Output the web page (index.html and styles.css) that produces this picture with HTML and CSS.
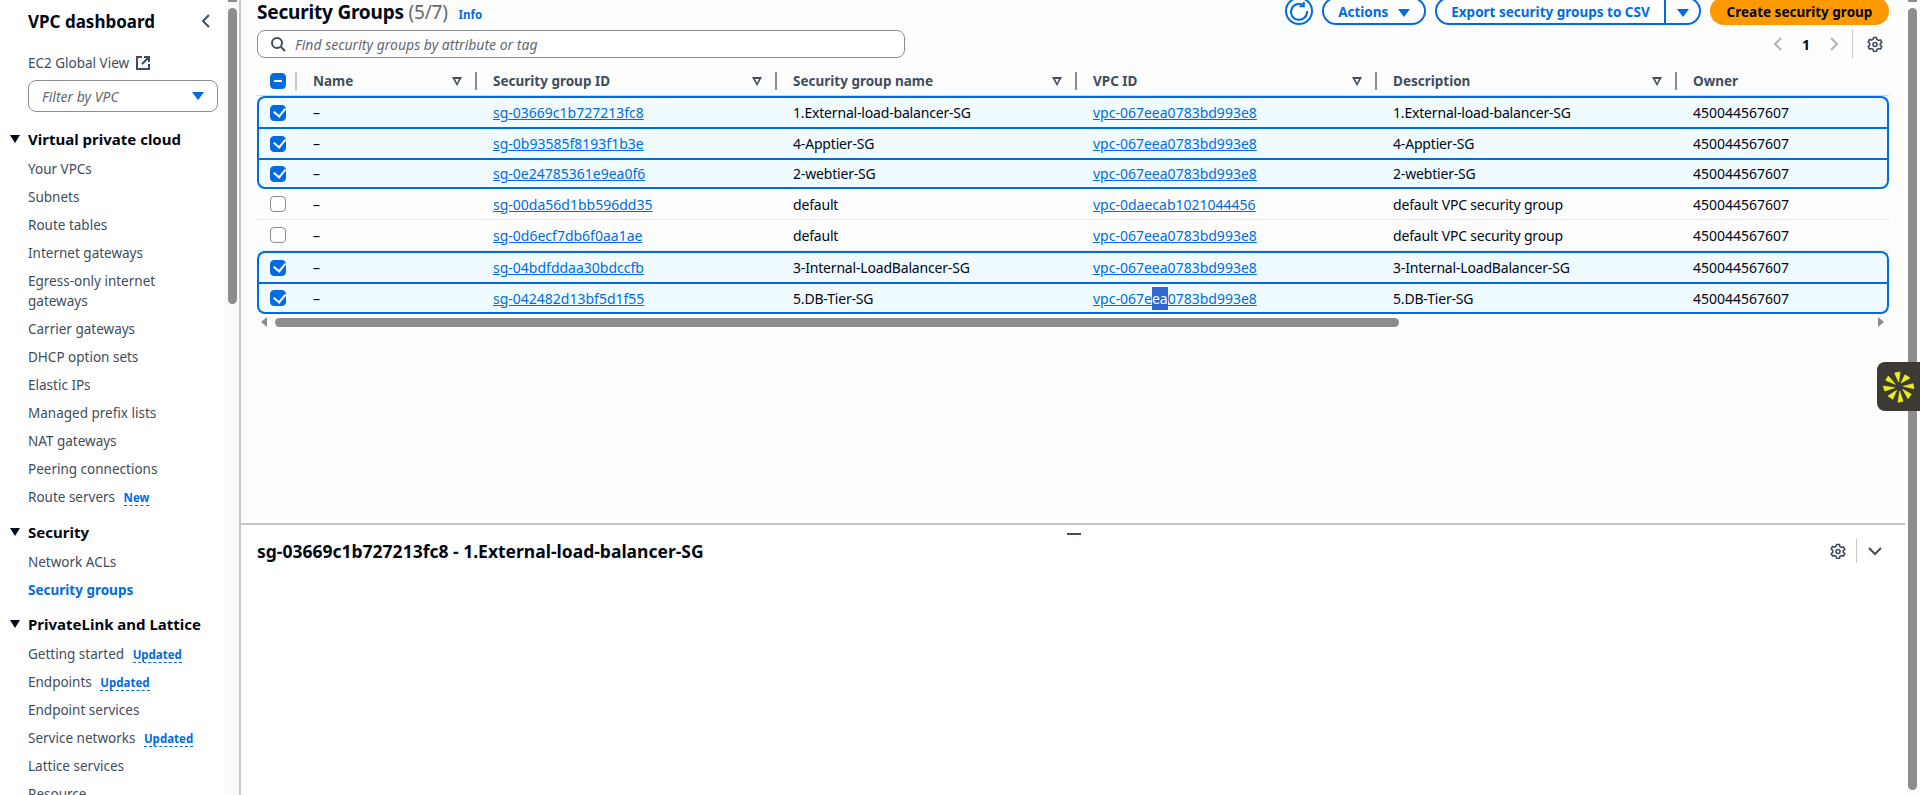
FILE: index.html
```html
<!DOCTYPE html>
<html lang="en">
  <head>
    <meta charset="UTF-8" />
    <title>Security Groups | VPC Console</title>
    <link rel="stylesheet" href="styles.css">
  </head>
  <body>
    <aside class="sidebar">
      <div class="side-title">
        <span>VPC dashboard</span>
        <svg class="side-close" width="16" height="16" viewBox="0 0 16 16"><path d="M11 2 5 8l6 6" fill="none" stroke="#414d5c" stroke-width="2"/></svg>
      </div>
      <div class="nav-item global-view">EC2 Global View
        <svg width="16" height="16" viewBox="0 0 16 16"><path d="M7 2H2v12h12V9M9 2h5v5M14 2 7 9" fill="none" stroke="#414d5c" stroke-width="2"/></svg>
      </div>
      <div class="vpc-filter"><span>Filter by VPC</span><i class="caret caret-blue"></i></div>

      <div class="nav-head">Virtual private cloud</div>
      <a class="nav-item">Your VPCs</a>
      <a class="nav-item">Subnets</a>
      <a class="nav-item">Route tables</a>
      <a class="nav-item">Internet gateways</a>
      <a class="nav-item">Egress-only internet gateways</a>
      <a class="nav-item">Carrier gateways</a>
      <a class="nav-item">DHCP option sets</a>
      <a class="nav-item">Elastic IPs</a>
      <a class="nav-item">Managed prefix lists</a>
      <a class="nav-item">NAT gateways</a>
      <a class="nav-item">Peering connections</a>
      <a class="nav-item">Route servers <span class="nav-badge">New</span></a>

      <div class="nav-head">Security</div>
      <a class="nav-item">Network ACLs</a>
      <a class="nav-item active">Security groups</a>

      <div class="nav-head">PrivateLink and Lattice</div>
      <a class="nav-item">Getting started <span class="nav-badge">Updated</span></a>
      <a class="nav-item">Endpoints <span class="nav-badge">Updated</span></a>
      <a class="nav-item">Endpoint services</a>
      <a class="nav-item">Service networks <span class="nav-badge">Updated</span></a>
      <a class="nav-item">Lattice services</a>
      <a class="nav-item">Resource</a>
      <div class="side-scroll"></div>
    </aside>

    <main class="content">
      <section class="list-pane">
        <header class="list-head">
          <h1>Security Groups <span class="count">(5/7)</span> <a class="info">Info</a></h1>
          <div class="actions">
            <button class="btn btn-round">
              <svg width="22" height="22" viewBox="0 0 22 22"><path d="M15.5 5.2A8 8 0 1 0 19 11" fill="none" stroke="#006ce0" stroke-width="2"/><path d="M15.8 2v4.2h-4.4" fill="none" stroke="#006ce0" stroke-width="2"/></svg>
            </button>
            <button class="btn btn-actions">Actions <i class="caret caret-blue"></i></button>
            <div class="split">
              <button class="split-main">Export security groups to CSV</button>
              <button class="split-drop"><i class="caret caret-blue"></i></button>
            </div>
            <button class="btn btn-primary">Create security group</button>
          </div>
        </header>

        <div class="tools">
          <div class="search">
            <svg width="16" height="16" viewBox="0 0 16 16"><circle cx="7" cy="7" r="5" fill="none" stroke="#414d5c" stroke-width="2"/><path d="m11 11 4 4" stroke="#414d5c" stroke-width="2"/></svg>
            <span>Find security groups by attribute or tag</span>
          </div>
          <div class="pager">
            <svg width="10" height="16" viewBox="0 0 10 16"><path d="M8 2 2 8l6 6" fill="none" stroke="#b4b4bb" stroke-width="2"/></svg>
            <b>1</b>
            <svg width="10" height="16" viewBox="0 0 10 16"><path d="m2 2 6 6-6 6" fill="none" stroke="#b4b4bb" stroke-width="2"/></svg>
            <span class="pager-sep"></span>
            <svg width="16" height="16" viewBox="0 0 16 16"><path d="M6.600 1.500h2.800l.4 2 1.700 1 2-.6 1.300 2.400-1.500 1.400v1.600l1.500 1.400-1.300 2.400-2-.6-1.700 1-.4 2H6.600l-.4-2-1.700-1-2 .6-1.300-2.400 1.500-1.400V7.300L1.200 5.900l1.300-2.400 2 .6 1.700-1z" fill="none" stroke="#414d5c" stroke-width="1.600"/><circle cx="8" cy="8.500" r="2" fill="none" stroke="#414d5c" stroke-width="1.600"/></svg>
          </div>
        </div>

        <div class="table">
          <div class="row row-head">
            <div class="cell"><i class="check check-mixed"></i><span class="col-sep light"></span></div>
            <div class="cell">Name<i class="sort"></i><span class="col-sep"></span></div>
            <div class="cell">Security group ID<i class="sort"></i><span class="col-sep"></span></div>
            <div class="cell">Security group name<i class="sort"></i><span class="col-sep"></span></div>
            <div class="cell">VPC ID<i class="sort"></i><span class="col-sep"></span></div>
            <div class="cell">Description<i class="sort"></i><span class="col-sep"></span></div>
            <div class="cell">Owner</div>
          </div>

          <div class="row selected first">
            <div class="cell"><i class="check checked"></i></div>
            <div class="cell">–</div>
            <div class="cell"><a>sg-03669c1b727213fc8</a></div>
            <div class="cell">1.External-load-balancer-SG</div>
            <div class="cell"><a>vpc-067eea0783bd993e8</a></div>
            <div class="cell">1.External-load-balancer-SG</div>
            <div class="cell">450044567607</div>
          </div>
          <div class="row selected">
            <div class="cell"><i class="check checked"></i></div>
            <div class="cell">–</div>
            <div class="cell"><a>sg-0b93585f8193f1b3e</a></div>
            <div class="cell">4-Apptier-SG</div>
            <div class="cell"><a>vpc-067eea0783bd993e8</a></div>
            <div class="cell">4-Apptier-SG</div>
            <div class="cell">450044567607</div>
          </div>
          <div class="row selected last">
            <div class="cell"><i class="check checked"></i></div>
            <div class="cell">–</div>
            <div class="cell"><a>sg-0e24785361e9ea0f6</a></div>
            <div class="cell">2-webtier-SG</div>
            <div class="cell"><a>vpc-067eea0783bd993e8</a></div>
            <div class="cell">2-webtier-SG</div>
            <div class="cell">450044567607</div>
          </div>
          <div class="row">
            <div class="cell"><i class="check"></i></div>
            <div class="cell">–</div>
            <div class="cell"><a>sg-00da56d1bb596dd35</a></div>
            <div class="cell">default</div>
            <div class="cell"><a>vpc-0daecab1021044456</a></div>
            <div class="cell">default VPC security group</div>
            <div class="cell">450044567607</div>
          </div>
          <div class="row">
            <div class="cell"><i class="check"></i></div>
            <div class="cell">–</div>
            <div class="cell"><a>sg-0d6ecf7db6f0aa1ae</a></div>
            <div class="cell">default</div>
            <div class="cell"><a>vpc-067eea0783bd993e8</a></div>
            <div class="cell">default VPC security group</div>
            <div class="cell">450044567607</div>
          </div>
          <div class="row selected first">
            <div class="cell"><i class="check checked"></i></div>
            <div class="cell">–</div>
            <div class="cell"><a>sg-04bdfddaa30bdccfb</a></div>
            <div class="cell">3-Internal-LoadBalancer-SG</div>
            <div class="cell"><a>vpc-067eea0783bd993e8</a></div>
            <div class="cell">3-Internal-LoadBalancer-SG</div>
            <div class="cell">450044567607</div>
          </div>
          <div class="row selected last tail">
            <div class="cell"><i class="check checked"></i></div>
            <div class="cell">–</div>
            <div class="cell"><a>sg-042482d13bf5d1f55</a></div>
            <div class="cell">5.DB-Tier-SG</div>
            <div class="cell"><a>vpc-067e<span class="text-sel">ea</span>0783bd993e8</a></div>
            <div class="cell">5.DB-Tier-SG</div>
            <div class="cell">450044567607</div>
          </div>

          <div class="h-scroll">
            <i class="arrow-left"></i>
            <div class="h-track"><div class="h-thumb"></div></div>
            <i class="arrow-right"></i>
          </div>
        </div>
      </section>

      <section class="detail-pane">
        <span class="drag-handle"></span>
        <div class="detail-head">
          <h2>sg-03669c1b727213fc8 - 1.External-load-balancer-SG</h2>
          <div class="detail-tools">
            <svg width="16" height="16" viewBox="0 0 16 16"><path d="M6.600 1.500h2.800l.4 2 1.700 1 2-.6 1.300 2.400-1.500 1.400v1.600l1.500 1.400-1.300 2.400-2-.6-1.700 1-.4 2H6.600l-.4-2-1.700-1-2 .6-1.300-2.400 1.500-1.400V7.300L1.200 5.900l1.300-2.400 2 .6 1.700-1z" fill="none" stroke="#414d5c" stroke-width="1.600"/><circle cx="8" cy="8.500" r="2" fill="none" stroke="#414d5c" stroke-width="1.600"/></svg>
            <span class="pager-sep"></span>
            <svg width="16" height="16" viewBox="0 0 16 16"><path d="m2 5 6 6 6-6" fill="none" stroke="#414d5c" stroke-width="2"/></svg>
          </div>
        </div>
      </section>
    </main>

    <div class="page-scroll"></div>

    <div class="widget">
      <svg width="36" height="36" viewBox="31 41 108 108">
        <g fill="#eef01a" stroke="#eef01a" stroke-width="2" stroke-linejoin="round">
          <polygon points="84,80 72,53 88,50"/>
          <polygon points="91,83 103,58 118,68"/>
          <polygon points="98,93 127,85 130,100"/>
          <polygon points="96,102 122,117 112,130"/>
          <polygon points="87,107 97,138 82,141"/>
          <polygon points="78,105 66,132 52,122"/>
          <polygon points="72,97 42,107 38,92"/>
          <polygon points="74,87 45,75 53,62"/>
        </g>
      </svg>
    </div>
  </body>
</html>
```

FILE: styles.css
```css
* {
  box-sizing: border-box;
}
html,
body {
  height: 100%;
}
body {
  margin: 0;
  display: flex;
  overflow: hidden;
  background: #fdfdfd;
  color: #000716;
  font-family: "Noto Sans", "Open Sans", sans-serif;
  font-size: 14px;
}
a {
  color: inherit;
}

/* left navigation */
.sidebar {
  position: relative;
  flex: 0 0 241px;
  height: 795px;
  overflow: hidden;
  padding-right: 18px;
  background: linear-gradient(to right, #fff 225px, #fafafa 225px);
  border-right: 2px solid #c6c6cd;
}
.side-title {
  display: flex;
  justify-content: space-between;
  align-items: center;
  height: 24px;
  margin: 9px 0 0 28px;
  padding-right: 9px;
  font-size: 17px;
  font-weight: 700;
}
.side-close {
  margin-right: -2px;
}
.nav-item {
  display: block;
  width: 210px;
  min-height: 28px;
  padding: 4px 6px 4px 28px;
  color: #414d5c;
  font-size: 13.5px;
  line-height: 20px;
}
.global-view {
  display: flex;
  align-items: center;
  gap: 6px;
  margin-top: 16px;
}
.vpc-filter {
  display: flex;
  justify-content: space-between;
  align-items: center;
  width: 190px;
  height: 32px;
  margin: 3px 0 14px 28px;
  padding: 0 13px;
  border: 1px solid #8c8c94;
  border-radius: 8px;
  color: #656871;
  font-size: 14px;
  font-style: italic;
}
.nav-head {
  position: relative;
  height: 29px;
  padding-left: 28px;
  color: #000716;
  font-size: 15px;
  font-weight: 700;
  line-height: 26px;
}
.nav-head::before {
  content: "";
  position: absolute;
  left: 10px;
  top: 9px;
  border-style: solid;
  border-width: 8px 5.500px 0;
  border-color: #000716 transparent transparent;
}
.nav-item + .nav-head {
  margin-top: 7.500px;
}
.nav-item.active {
  color: #006ce0;
  font-weight: 700;
}
.nav-badge {
  margin-left: 5px;
  border-bottom: 1px dashed #006ce0;
  color: #006ce0;
  font-size: 11.500px;
  font-weight: 700;
  line-height: 1;
}
.side-scroll {
  position: absolute;
  left: 228px;
  top: 8px;
  width: 9px;
  height: 296px;
  border-radius: 5px;
  background: #8d8d8d;
}
.side-scroll::before,
.page-scroll::before {
  content: "";
  position: absolute;
  left: 0;
  top: -8px;
  width: 100%;
  height: 2px;
  background: #8d8d8d;
}
.caret {
  display: inline-block;
  border-style: solid;
  border-width: 8px 6px 0;
  border-color: #000716 transparent transparent;
}
.caret-blue {
  border-top-color: #006ce0;
}

/* main column */
.content {
  flex: 0 0 1667px;
  display: flex;
  flex-direction: column;
  height: 795px;
  overflow: hidden;
}
.list-pane {
  flex: 0 0 525px;
  margin-right: 3px;
  padding: 0 16px;
  border-bottom: 2px solid #c6c6cd;
}
.list-head {
  display: flex;
  justify-content: space-between;
  align-items: center;
  height: 28px;
  margin-top: -3px;
}
.list-head h1 {
  margin: 4px 0 0;
  font-size: 19px;
  font-weight: 700;
  line-height: 22px;
  letter-spacing: -0.2px;
}
.count {
  color: #656871;
  font-weight: 400;
}
.info {
  margin-left: 6px;
  color: #006ce0;
  font-size: 11.500px;
  letter-spacing: 0;
}
.actions {
  display: flex;
  align-items: center;
  gap: 9px;
}
.btn,
.split {
  height: 28px;
  border: 2px solid #006ce0;
  border-radius: 20px;
  background: #fff;
  color: #006ce0;
  font: 700 13.500px "Noto Sans", "Open Sans", sans-serif;
}
.btn-round {
  display: flex;
  align-items: center;
  justify-content: center;
  width: 28px;
  padding: 0;
}
.btn-actions {
  width: 104px;
  padding: 2px 0 0;
}
.btn-actions .caret {
  margin-left: 6px;
}
.split {
  display: flex;
  width: 266px;
  overflow: hidden;
}
.split button {
  border: 0;
  background: none;
  color: inherit;
  font: inherit;
  padding: 2px 0 0;
}
.split-main {
  flex: 1;
  border-right: 2px solid #006ce0 !important;
}
.split-drop {
  width: 33px;
}
.btn-primary {
  width: 179px;
  padding: 2px 0 0;
  border-color: #ff9900;
  background: #ff9900;
  color: #000716;
}
.tools {
  display: flex;
  justify-content: space-between;
  align-items: center;
  height: 28px;
  margin-top: 5px;
}
.search {
  display: flex;
  align-items: center;
  gap: 9px;
  width: 648px;
  height: 28px;
  padding: 0 12px;
  border: 1px solid #8c8c94;
  border-radius: 8px;
  background: #fff;
  color: #656871;
  font-style: italic;
}
.pager {
  display: flex;
  align-items: center;
  padding-right: 6px;
}
.pager b {
  margin: 0 19px;
}
.pager-sep {
  width: 1px;
  height: 28px;
  margin: 0 14px 0 13px;
  background: #c6c6cd;
}

/* table */
.table {
  width: 1632px;
  margin-top: 8px;
}
.row {
  display: grid;
  grid-template-columns: 56px 180px 300px 300px 300px 300px 196px;
  height: 31px;
  border-bottom: 1px solid #e9e9ed;
}
.row-head {
  height: 30px;
  border-bottom: 1px solid #d5d5da;
  color: #414d5c;
  font-size: 13.500px;
  font-weight: 700;
}
.cell {
  position: relative;
  display: flex;
  align-items: center;
  padding-right: 12px;
  white-space: nowrap;
}
.cell:first-child {
  padding-left: 13px;
}
.row:not(.row-head) .cell:nth-child(4),
.row:not(.row-head) .cell:nth-child(6) {
  letter-spacing: -0.180px;
}
.sort {
  position: absolute;
  right: 31px;
  top: 11px;
  width: 0;
  height: 0;
  border-style: solid;
  border-width: 9px 5.500px 0;
  border-color: #414d5c transparent transparent;
}
.sort::after {
  content: "";
  position: absolute;
  left: -2.500px;
  top: -7px;
  border-style: solid;
  border-width: 4.500px 2.500px 0;
  border-color: #fdfdfd transparent transparent;
}
.col-sep {
  position: absolute;
  right: 16px;
  top: 6px;
  width: 2px;
  height: 18px;
  background: #8c8c94;
}
.col-sep.light {
  background: #c6c6cd;
}
.cell a {
  color: #006ce0;
  text-decoration: underline;
}
.check {
  display: block;
  position: relative;
  width: 16px;
  height: 16px;
  border: 1px solid #8c8c94;
  border-radius: 4px;
  background: #fff;
}
.check.checked,
.check-mixed {
  border-color: #006ce0;
  background: #006ce0;
}
.check.checked::after {
  content: "";
  position: absolute;
  left: 2.500px;
  top: 1.500px;
  width: 9px;
  height: 5.500px;
  border-left: 2px solid #fff;
  border-bottom: 2px solid #fff;
  transform: rotate(-50deg);
}
.check-mixed::after {
  content: "";
  position: absolute;
  left: 3px;
  top: 6px;
  width: 8px;
  height: 2px;
  background: #fff;
}
.row.selected {
  grid-template-columns: 54px 180px 300px 300px 300px 300px 194px;
  border: 0 solid #006ce0;
  border-width: 2px 2px 0;
  background: #f0fbff;
}
.row.selected .cell:first-child {
  padding-left: 11px;
}
.row.selected.first {
  border-radius: 8px 8px 0 0;
}
.row.selected.last {
  border-bottom-width: 2px;
  border-radius: 0 0 8px 8px;
}
.row.selected.tail {
  height: 32px;
}
.text-sel {
  background: #3367d1;
  color: #fff;
  padding: 2px 0;
}
.h-scroll {
  display: flex;
  align-items: center;
  height: 10px;
  margin-top: 3px;
  padding: 0 5px 0 4px;
}
.h-track {
  flex: 1;
  padding: 0 8px;
}
.h-thumb {
  width: 1124px;
  height: 9px;
  border-radius: 5px;
  background: #8d8d8d;
}
.arrow-left,
.arrow-right {
  border-style: solid;
  border-color: transparent #8d8d8d;
  border-width: 5px 6px 5px 0;
}
.arrow-right {
  border-width: 5px 0 5px 6px;
}

/* split panel */
.detail-pane {
  position: relative;
  flex: 1;
  background: #fff;
}
.detail-head {
  display: flex;
  justify-content: space-between;
  align-items: center;
  height: 52px;
  padding: 0 25px 0 16px;
}
.detail-head h2 {
  margin: 0;
  font-size: 17.500px;
  font-weight: 700;
}
.detail-tools {
  display: flex;
  align-items: center;
}
.detail-tools .pager-sep {
  height: 24px;
  margin: 0 10px;
}
.drag-handle {
  position: absolute;
  left: 826px;
  top: 8px;
  width: 14px;
  height: 2px;
  background: #414d5c;
}

.page-scroll {
  position: relative;
  flex: 0 0 9px;
  height: 782px;
  margin-top: 8px;
  border-radius: 5px;
  background: #8d8d8d;
}
.widget {
  position: absolute;
  right: 0;
  top: 362px;
  display: flex;
  align-items: center;
  justify-content: center;
  width: 43px;
  height: 49px;
  border-radius: 8px 0 0 8px;
  background: #3d3a35;
}
```
